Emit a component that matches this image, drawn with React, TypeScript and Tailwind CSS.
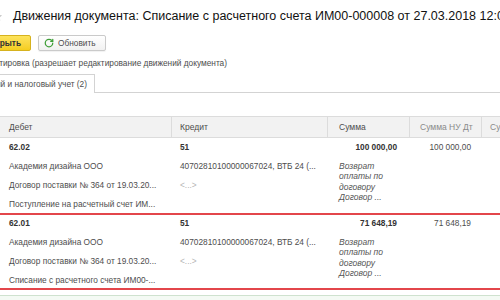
import { RotateCw } from 'lucide-react';

const cols = 'grid grid-cols-[172px_156px_82px_72px_120px]';

const rows = [
  {
    id: 'r1',
    debit: '62.02',
    sum: '100 000,00',
    sumNu: '100 000,00',
    doc: 'Поступление на расчетный счет ИМ...',
    marked: false,
  },
  {
    id: 'r2',
    debit: '62.01',
    sum: '71 648,19',
    sumNu: '71 648,19',
    doc: 'Списание с расчетного счета ИМ00-...',
    marked: true,
  },
];

const EntryRow = ({ row }: { row: (typeof rows)[number] }) => (
  <div className={`${cols} relative text-[8.3px] leading-[19px] text-[#4d4d4d]`}>
    <div className="flex flex-col pl-[9px] whitespace-nowrap">
      <span className="font-bold text-[#333]">{row.debit}</span>
      <span>Академия дизайна ООО</span>
      <span>Договор поставки № 364 от 19.03.20...</span>
      <span>{row.doc}</span>
    </div>
    <div className="flex flex-col pl-[8px] whitespace-nowrap">
      <span className="font-bold text-[#333]">51</span>
      <span>40702810100000067024, ВТБ 24 (...</span>
      <span className="text-[#b5b5b5]">&lt;...&gt;</span>
    </div>
    <div className="flex flex-col pl-[11px] pr-[13px]">
      <span className="text-right font-bold text-[#333]">{row.sum}</span>
      <span className="pt-[4px] text-[8.5px] italic leading-[10.4px] text-[#555]">
        Возврат
        <br />
        оплаты по
        <br />
        договору
        <br />
        Договор ...
      </span>
    </div>
    <div className="pr-[11px] text-right">{row.sumNu}</div>
    <div />
    {/* красная рамка-пометка поверх строки */}
    {row.marked && (
      <div className="pointer-events-none absolute -top-[1px] -left-[4px] -right-[4px] bottom-0 border-y-2 border-[#e3464b]" />
    )}
  </div>
);

export default function App() {
  return (
    <div className="w-[500px] h-[300px] overflow-hidden bg-white font-['Liberation_Sans',Arial,sans-serif] text-[#4d4d4d]">
      {/* заголовок */}
      <div className="flex h-[32px] items-center whitespace-nowrap">
        <svg width="11" height="11" viewBox="0 0 24 24" className="-ml-[8px] mr-[10px] shrink-0">
          <path
            d="M12 2l3 6.5 7 .8-5.2 4.8 1.4 7L12 17.6 5.8 21.1l1.4-7L2 9.3l7-.8z"
            fill="#c9c9c9"
          />
        </svg>
        <h1 className="text-[12.5px] font-normal text-[#111]">
          Движения документа: Списание с расчетного счета ИМ00-000008 от 27.03.2018 12:02
        </h1>
      </div>

      {/* командная панель */}
      <div className="mt-[3px] flex h-[16px] items-stretch gap-[7px] whitespace-nowrap text-[8.3px]">
        <button className="-ml-[29px] w-[60px] rounded-[2px] border border-[#d6b21e] bg-gradient-to-b from-[#fde35a] to-[#f5cd1c] pr-[9px] text-right font-bold text-[#333]">
          Закрыть
        </button>
        <button className="flex items-center gap-[4px] rounded-[2px] border border-[#cacaca] bg-gradient-to-b from-white to-[#f1f1f1] pl-[5px] pr-[9px] text-[#4d4d4d] shadow-[0_1px_1px_rgba(0,0,0,0.06)]">
          <RotateCw size={10} strokeWidth={3} color="#3f9e37" />
          Обновить
        </button>
      </div>

      {/* флажок */}
      <div className="mt-[3px] -ml-[173px] w-[400px] whitespace-nowrap text-right text-[8.3px] leading-[18px] text-[#4d4d4d]">
        Ручная корректировка (разрешает редактирование движений документа)
      </div>

      {/* закладки */}
      <div className="mt-[2px] flex h-[19px] whitespace-nowrap text-[8.3px]">
        <div className="-ml-[105px] w-[200px] border-t border-r border-[#d3d3d3] bg-white pr-[7px] text-right leading-[18px] text-[#4d4d4d]">
          Бухгалтерский и налоговый учет (2)
        </div>
        <div className="flex-1 border-b border-[#d3d3d3]" />
      </div>

      {/* таблица */}
      <div className="mt-[23px]">
        <div className={`${cols} h-[22px] border-y border-[#dcdcdc] bg-[#f2f2f2] text-[8.5px] whitespace-nowrap`}>
          <div className="flex items-center border-r border-[#dcdcdc] pl-[9px] text-[#4d4d4d]">Дебет</div>
          <div className="flex items-center border-r border-[#dcdcdc] pl-[8px] text-[#4d4d4d]">Кредит</div>
          <div className="flex items-center border-r border-[#dcdcdc] pl-[11px] text-[#4d4d4d]">Сумма</div>
          <div className="flex items-center border-r border-[#dcdcdc] pl-[10px] text-[#8a8a8a]">Сумма НУ Дт</div>
          <div className="flex items-center pl-[8px] text-[#8a8a8a]">Сумма НУ Кт</div>
        </div>

        {rows.map((row) => (
          <EntryRow key={row.id} row={row} />
        ))}

        <div className="mt-[5px] h-[20px] border-t border-[#cfe2cf] bg-[#f4faf4]" />
      </div>
    </div>
  );
}
